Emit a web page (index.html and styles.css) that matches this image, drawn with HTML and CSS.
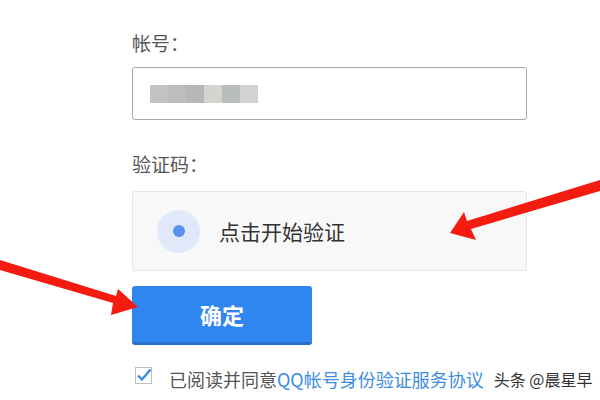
FILE: index.html
```html
<!DOCTYPE html>
<html lang="zh-CN">
<head>
<meta charset="utf-8">
<link rel="stylesheet" href="styles.css">
</head>
<body>
<div class="page">
  <div class="form">
    <div class="label label-first">帐号：</div>
    <div class="input">
      <div class="blur">
        <span class="b b1"></span><span class="b b2"></span><span class="b b3"></span><span class="b b4"></span><span class="b b5"></span><span class="b b6"></span>
      </div>
    </div>
    <div class="label label-second">验证码：</div>
    <div class="captcha">
      <span class="ring"><span class="dot"></span></span>
      <span class="captcha-text">点击开始验证</span>
    </div>
    <div class="btn">确定</div>
    <div class="agree">
      <svg class="check" width="17" height="17" viewBox="0 0 17 17">
        <rect x="0.5" y="0.5" width="16" height="16" fill="#fff" stroke="#bfbfbf"/>
        <path d="M3 8.5 L7 12.5 L15.5 2.5" fill="none" stroke="#3d8be6" stroke-width="2.4"/>
      </svg>
      <span class="agree-text">已阅读并同意<span class="link">QQ帐号身份验证服务协议</span></span>
      <span class="mark">头条 @晨星早</span>
    </div>
  </div>
  <svg class="arrows" width="600" height="400" viewBox="0 0 600 400">
    <polygon points="600,180 467,221 464,212 450,233 476,240 471,229 600,191" fill="#f41c10"/>
    <polygon points="0,260 116,296 118,289 138,307 111,315 113,303 0,270" fill="#f41c10"/>
  </svg>
</div>
</body>
</html>
```
FILE: styles.css
```css
html, body {
  margin: 0;
  padding: 0;
  background: #fff;
}
.page {
  position: relative;
  width: 600px;
  height: 400px;
  overflow: hidden;
  font-family: "Noto Sans CJK SC", "Noto Sans", sans-serif;
}
.form {
  padding-left: 132px;
  padding-top: 29px;
  width: 395px;
}
.label {
  font-size: 19px;
  line-height: 28px;
  color: #555;
}
.label-first {
  margin-bottom: 10px;
}
.label-second {
  margin-top: 30px;
  margin-bottom: 13px;
}
.input {
  height: 51px;
  border: 1px solid #a9a9a9;
  border-radius: 3px;
  display: flex;
  align-items: center;
  box-sizing: content-box;
}
.blur {
  display: flex;
  margin-left: 17px;
  height: 18px;
}
.b {
  width: 18px;
  height: 18px;
}
.b1 { background: #c5c2c5; }
.b2 { background: #bebdbe; }
.b3 { background: #b6b7b9; }
.b4 { background: #d4d5cf; }
.b5 { background: #babdbe; }
.b6 { background: #d2d2d2; }
.captcha {
  height: 78px;
  border: 1px solid #e6e6e6;
  border-radius: 3px;
  background: #f8f8f8;
  display: flex;
  align-items: center;
  padding-left: 24px;
}
.ring {
  width: 43px;
  height: 43px;
  border-radius: 50%;
  background: #dfe9fa;
  display: flex;
  align-items: center;
  justify-content: center;
}
.dot {
  width: 12px;
  height: 12px;
  border-radius: 50%;
  background: #5990f0;
}
.captcha-text {
  margin-left: 19px;
  font-size: 21px;
  color: #333;
}
.btn {
  margin-top: 15px;
  width: 180px;
  height: 56px;
  border-bottom: 3px solid #2a6fcb;
  border-radius: 3px;
  background: #2f86ee;
  color: #fff;
  font-size: 22px;
  font-weight: bold;
  display: flex;
  align-items: center;
  justify-content: center;
}
.agree {
  margin-top: 21px;
  display: flex;
  align-items: center;
  margin-left: 3px;
  width: 470px;
}
.check {
  flex: none;
  margin-top: -8px;
}
.agree-text {
  margin-left: 17px;
  font-size: 18px;
  color: #555;
  white-space: nowrap;
}
.link {
  color: #3c8de3;
}
.mark {
  margin-left: 10px;
  font-size: 16px;
  color: #333;
  white-space: nowrap;
}
.arrows {
  position: absolute;
  left: 0;
  top: 0;
  pointer-events: none;
}
```
